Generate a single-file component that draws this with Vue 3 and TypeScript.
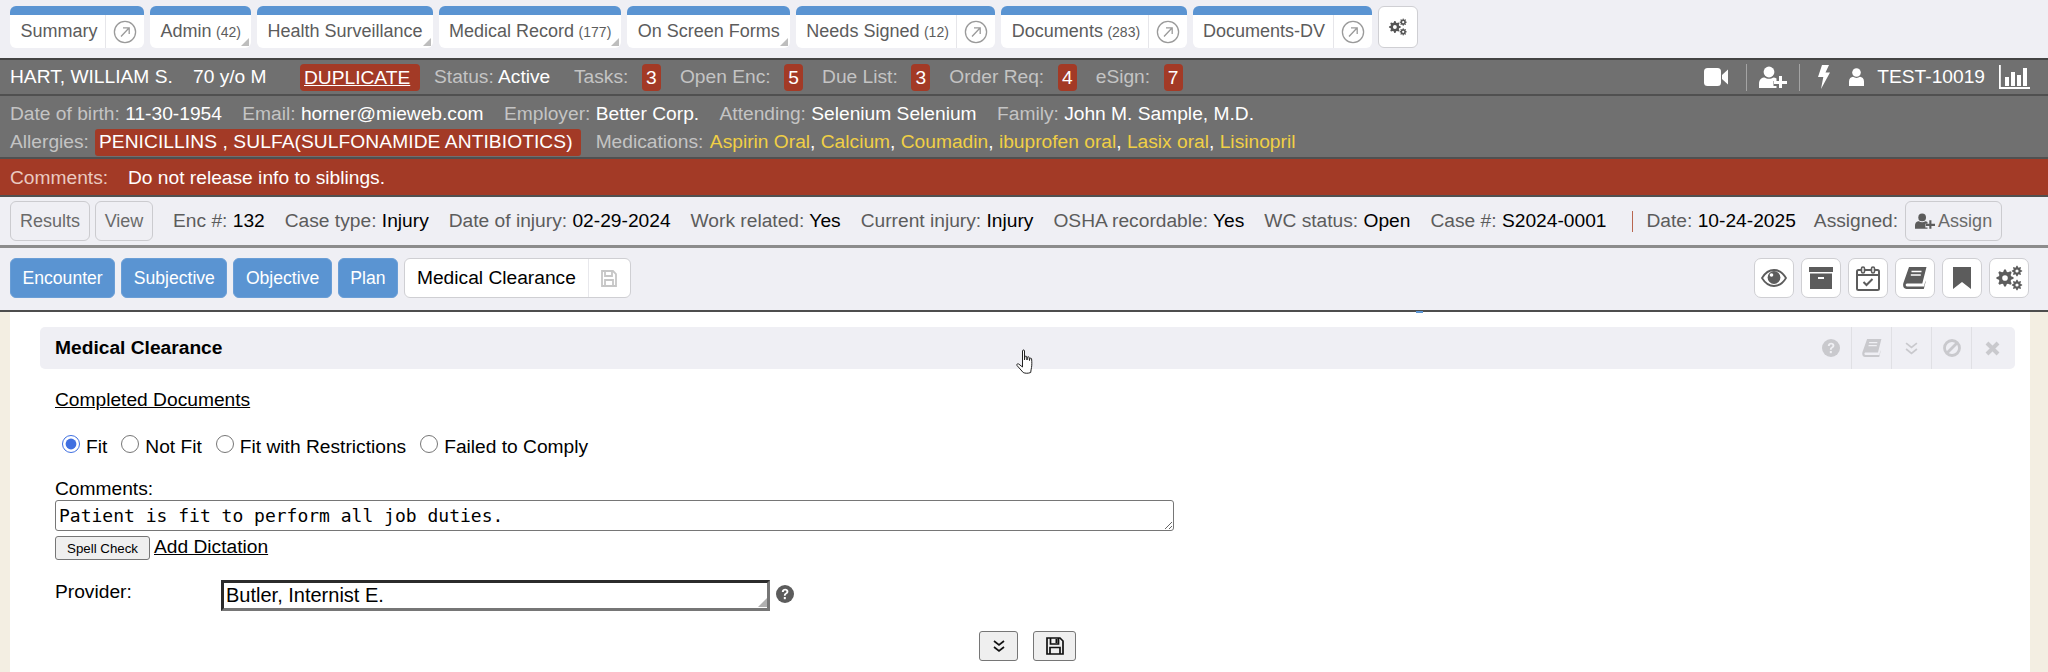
<script setup lang="ts">
interface Tab { name: string; count?: string; ext?: boolean }
const tabs: Tab[] = [
  { name: 'Summary', ext: true },
  { name: 'Admin', count: '(42)' },
  { name: 'Health Surveillance' },
  { name: 'Medical Record', count: '(177)' },
  { name: 'On Screen Forms' },
  { name: 'Needs Signed', count: '(12)', ext: true },
  { name: 'Documents', count: '(283)', ext: true },
  { name: 'Documents-DV', ext: true }
]
const counts = [
  { label: 'Tasks:', n: 3 },
  { label: 'Open Enc:', n: 5 },
  { label: 'Due List:', n: 3 },
  { label: 'Order Req:', n: 4 },
  { label: 'eSign:', n: 7 }
]
const demo = [
  ['Date of birth:', '11-30-1954'],
  ['Email:', 'horner@mieweb.com'],
  ['Employer:', 'Better Corp.'],
  ['Attending:', 'Selenium Selenium'],
  ['Family:', 'John M. Sample, M.D.']
]
const meds = ['Aspirin Oral', 'Calcium', 'Coumadin', 'ibuprofen oral', 'Lasix oral', 'Lisinopril']
const enc = [
  ['Enc #:', '132'],
  ['Case type:', 'Injury'],
  ['Date of injury:', '02-29-2024'],
  ['Work related:', 'Yes'],
  ['Current injury:', 'Injury'],
  ['OSHA recordable:', 'Yes'],
  ['WC status:', 'Open'],
  ['Case #:', 'S2024-0001']
]
const steps = ['Encounter', 'Subjective', 'Objective', 'Plan']
const radios = [
  { label: 'Fit', checked: true },
  { label: 'Not Fit', checked: false },
  { label: 'Fit with Restrictions', checked: false },
  { label: 'Failed to Comply', checked: false }
]

function gear(cx: number, cy: number, r: number, rIn: number, hole: number, teeth: number): string {
  let d = ''
  const n = teeth * 4
  for (let i = 0; i < n; i++) {
    const a = ((i - 0.5) / n) * Math.PI * 2
    const rad = i % 4 < 2 ? r : rIn
    d += (i ? 'L' : 'M') + (cx + rad * Math.cos(a)).toFixed(2) + ' ' + (cy + rad * Math.sin(a)).toFixed(2)
  }
  d += 'Z'
  d += `M${cx - hole} ${cy}a${hole} ${hole} 0 1 0 ${hole * 2} 0a${hole} ${hole} 0 1 0 ${-hole * 2} 0Z`
  return d
}
const gearsPath = gear(9, 13, 8.6, 6.4, 2.8, 8) + gear(21, 6, 5.2, 3.8, 1.6, 8) + gear(21, 20, 5.2, 3.8, 1.6, 8)
</script>

<template>
  <div class="page">
    <nav class="tabs">
      <div v-for="t in tabs" :key="t.name" class="tab" :class="{ menu: !t.ext }">
        <span class="tab-label">{{ t.name }}<small v-if="t.count">{{ t.count }}</small></span>
        <span v-if="t.ext" class="tab-ext">
          <svg width="24" height="24" viewBox="0 0 24 24" fill="none" stroke="#9a9a9a" stroke-width="1.3">
            <circle cx="12" cy="12" r="10.6" />
            <path d="M8 16.5 16 8M10 7.8h6.2V14" />
          </svg>
        </span>
      </div>
      <button class="tab-gear" type="button" aria-label="Settings">
        <svg width="20" height="18" viewBox="0 0 27 26"><path :d="gearsPath" fill="#555" fill-rule="evenodd" /></svg>
      </button>
    </nav>

    <section class="bar bar-top">
      <span class="name">HART, WILLIAM S.</span>
      <span class="age">70 y/o M</span>
      <a class="dup">DUPLICATE</a>
      <span class="lab status">Status: <b>Active</b></span>
      <template v-for="c in counts" :key="c.label">
        <span class="lab count-lab">{{ c.label }}</span>
        <span class="badge">{{ c.n }}</span>
      </template>
      <div class="top-icons">
        <svg class="i-cam" width="24" height="18" viewBox="0 0 24 18" fill="#fff"><rect width="17" height="18" rx="3.5" /><path d="M18 7 24 1.5v15L18 11Z" /></svg>
        <i class="vr vr-a"></i>
        <svg class="i-up" width="28" height="22" viewBox="0 0 28 22" fill="#fff"><circle cx="10" cy="6" r="5.4" /><path d="M0 22v-4c0-5 3-6.500 5.500-6.500 2.500 1.800 6.500 1.800 9 0 1 0 2 .3 3 1V15h-3v5h3v2Z" /><path d="M20 10h3v5h5v3h-5v4h-3v-4h-5v-3h5Z" /></svg>
        <i class="vr vr-b"></i>
        <svg class="i-bolt" width="12" height="24" viewBox="0 0 12 24" fill="#fff"><path d="M4 0h7L7.500 7.500H12L3 24l2.300-12H0Z" /></svg>
        <svg class="i-user" width="15" height="18" viewBox="0 0 15 18" fill="#fff"><circle cx="7.500" cy="4.500" r="4.300" /><path d="M0 18v-4.500C0 10.500 2 9 4 8.800c2 1.500 5 1.500 7 0 2 .2 4 1.700 4 4.700V18Z" /></svg>
        <span class="uid">TEST-10019</span>
        <svg class="i-chart" width="31" height="24" viewBox="0 0 31 24" fill="#fff"><path d="M0 0h1.800v22H31v2H0Z" /><rect x="6" y="12" width="4" height="9" /><rect x="12" y="7" width="4" height="14" /><rect x="18" y="10" width="4" height="11" /><rect x="24" y="3" width="4" height="18" /></svg>
      </div>
    </section>

    <section class="bar-info">
      <div class="info-row">
        <span v-for="d in demo" :key="d[0]" class="lab">{{ d[0] }} <b>{{ d[1] }}</b></span>
      </div>
      <div class="info-row second">
        <span class="lab allergy-lab">Allergies:</span>
        <span class="allergy">PENICILLINS , SULFA(SULFONAMIDE ANTIBIOTICS)</span>
        <span class="lab med-lab">Medications:</span>
        <span class="meds">
          <template v-for="(m, i) in meds" :key="m"><em>{{ m }}</em><template v-if="i < meds.length - 1">, </template></template>
        </span>
      </div>
    </section>

    <section class="bar-comment">
      <span class="c-lab">Comments:</span>
      <span>Do not release info to siblings.</span>
    </section>

    <section class="enc-row">
      <button class="ghost results" type="button">Results</button>
      <button class="ghost view" type="button">View</button>
      <div class="enc-fields">
        <span v-for="e in enc" :key="e[0]" class="f">{{ e[0] }} <b>{{ e[1] }}</b></span>
      </div>
      <i class="enc-div"></i>
      <span class="f date">Date: <b>10-24-2025</b></span>
      <span class="f assigned">Assigned:</span>
      <button class="ghost assign" type="button">
        <svg width="20" height="16" viewBox="0 0 28 22" fill="#5c5c5c"><circle cx="10" cy="6" r="5.400" /><path d="M0 22v-4c0-5 3-6.500 5.500-6.500 2.500 1.800 6.500 1.800 9 0 1 0 2 .3 3 1V15h-3v5h3v2Z" /><path d="M20 10h3v5h5v3h-5v4h-3v-4h-5v-3h5Z" /></svg>
        Assign
      </button>
    </section>

    <section class="toolbar">
      <button v-for="s in steps" :key="s" class="step" type="button">{{ s }}</button>
      <div class="current">
        <span class="cur-name">Medical Clearance</span>
        <span class="cur-save">
          <svg width="16" height="17" viewBox="0 0 16 17" fill="none" stroke="#c6c6c6" stroke-width="1.800"><path d="M1 1h11l3 3v12H1Z" /><path d="M4 1v5h7V1M4 16v-6h8v6" /></svg>
        </span>
      </div>
      <div class="tools">
        <button class="tool" type="button" aria-label="View">
          <svg width="26" height="18" viewBox="0 0 26 18"><path d="M1 9c3-5 7.500-8 12-8s9 3 12 8c-3 5-7.500 8-12 8S4 14 1 9Z" fill="none" stroke="#5c5c5c" stroke-width="1.800" /><circle cx="13" cy="8.500" r="6.400" fill="#5c5c5c" /><circle cx="10.500" cy="6" r="1.800" fill="#fff" /></svg>
        </button>
        <button class="tool" type="button" aria-label="Archive">
          <svg width="24" height="22" viewBox="0 0 24 22" fill="#5c5c5c"><rect width="24" height="5" /><path d="M1 6.500h22V22H1ZM9 10v2h6v-2Z" fill-rule="evenodd" /></svg>
        </button>
        <button class="tool" type="button" aria-label="Calendar">
          <svg width="24" height="25" viewBox="0 0 24 25" fill="none" stroke="#5c5c5c" stroke-width="2"><rect x="1" y="4" width="22" height="20" rx="1.500" /><path d="M1 9h22" /><rect x="5.500" y="1" width="3" height="6" rx="1.500" fill="#fff" stroke-width="1.600" /><rect x="15.500" y="1" width="3" height="6" rx="1.500" fill="#fff" stroke-width="1.600" /><path d="m7.500 16 3 3 6-6" /></svg>
        </button>
        <button class="tool" type="button" aria-label="Book">
          <svg width="24" height="22" viewBox="0 0 24 22"><path d="M6 0h17.500l-4.200 16.500H4c-1.700 0-1.700 3 0 3h17l1.500-6v1.800L20.800 22H3.500C.5 22-.5 19 .4 16Z" fill="#5c5c5c" /><path d="M8.500 4.500h10M7.800 8h10" stroke="#fff" stroke-width="1.600" /></svg>
        </button>
        <button class="tool" type="button" aria-label="Bookmark">
          <svg width="18" height="22" viewBox="0 0 18 22" fill="#5c5c5c"><path d="M0 0h18v22l-9-7-9 7Z" /></svg>
        </button>
        <button class="tool" type="button" aria-label="Settings">
          <svg width="27" height="26" viewBox="0 0 27 26"><path :d="gearsPath" fill="#5c5c5c" fill-rule="evenodd" /></svg>
        </button>
      </div>
    </section>

    <main class="content">
      <i class="blip"></i>
      <div class="panel-head">
        <span class="panel-title">Medical Clearance</span>
        <div class="panel-icons">
          <span class="pi pi-q">
            <svg width="18" height="18" viewBox="0 0 18 18"><circle cx="9" cy="9" r="9" fill="#c9c9cd" /><path d="M5.800 7c0-4.300 6.600-4.300 6.600-.4 0 2.500-2.700 2.300-2.700 4.200H7.900c0-3 2.500-2.800 2.500-4.100 0-1.500-2.600-1.500-2.600.3Z" fill="#f0f0f4" /><rect x="7.800" y="12" width="2" height="2.200" fill="#f0f0f4" /></svg>
          </span>
          <span class="pi">
            <svg width="20" height="18" viewBox="0 0 24 22"><path d="M6 0h17.500l-4.200 16.500H4c-1.700 0-1.700 3 0 3h17l1.500-6v1.800L20.800 22H3.500C.5 22-.5 19 .4 16Z" fill="#c9c9cd" /><path d="M8.500 4.500h10M7.800 8h10" stroke="#f0f0f4" stroke-width="1.600" /></svg>
          </span>
          <span class="pi">
            <svg width="13" height="13" viewBox="0 0 12 12" fill="none" stroke="#c9c9cd" stroke-width="1.600"><path d="m1 1 5 4 5-4M1 6.500l5 4 5-4" /></svg>
          </span>
          <span class="pi">
            <svg width="18" height="18" viewBox="0 0 18 18" fill="none" stroke="#c9c9cd" stroke-width="2.800"><circle cx="9" cy="9" r="7.500" /><path d="M4 14 14 4" /></svg>
          </span>
          <span class="pi">
            <svg width="15" height="15" viewBox="0 0 15 15" fill="none" stroke="#c9c9cd" stroke-width="4"><path d="m2 2 11 11M13 2 2 13" /></svg>
          </span>
        </div>
      </div>

      <form class="form" @submit.prevent>
        <a class="doc-link">Completed Documents</a>
        <div class="radios">
          <label v-for="r in radios" :key="r.label" class="radio">
            <input type="radio" name="fit" :checked="r.checked" />{{ r.label }}
          </label>
        </div>
        <div class="comment-lab">Comments:</div>
        <textarea class="ta" readonly>Patient is fit to perform all job duties.</textarea>
        <div class="spell-row">
          <button class="spell" type="button">Spell Check</button>
          <a class="dict">Add Dictation</a>
        </div>
        <div class="prov-row">
          <span class="prov-lab">Provider:</span>
          <div class="prov-box">
            <input class="prov" type="text" value="Butler, Internist E." readonly />
          </div>
          <svg class="prov-q" width="18" height="18" viewBox="0 0 18 18"><circle cx="9" cy="9" r="9" fill="#5c5c5c" /><path d="M5.800 7c0-4.300 6.600-4.300 6.600-.4 0 2.500-2.700 2.300-2.700 4.200H7.900c0-3 2.500-2.800 2.500-4.100 0-1.500-2.600-1.500-2.600.3Z" fill="#fff" /><rect x="7.800" y="12" width="2" height="2.200" fill="#fff" /></svg>
        </div>
        <div class="actions">
          <button class="act act-a" type="button" aria-label="Expand">
            <svg width="12" height="13" viewBox="0 0 12 13" fill="none" stroke="#111" stroke-width="1.700"><path d="m1 1 5 4 5-4M1 7l5 4 5-4" /></svg>
          </button>
          <button class="act act-b" type="button" aria-label="Save">
            <svg width="18" height="18" viewBox="0 0 18 18" fill="none" stroke="#111" stroke-width="1.700"><path d="M1 1h13l3 3v13H1Z" /><path d="M4.500 1v6h8V1M4 17v-6.500h10V17" /><rect x="9.500" y="2" width="2" height="4" fill="#111" stroke="none" /></svg>
          </button>
        </div>
      </form>

      <svg class="hand" width="20" height="26" viewBox="0 0 20 26" fill="#fff" stroke="#222" stroke-width="1" stroke-linejoin="round"><path d="M6.500 2c0-1.400 2-1.400 2 0v9l.3-3c.2-1.200 1.900-1.100 2 0l.2 3 .3-2.500c.2-1.100 1.800-1 1.900.1l.3 2.900.3-1.700c.2-1 1.700-.9 1.800.2.300 3 .3 6.500-.1 8.500-.3 1.700-.6 3-.8 5-2.500 1-5.500 1-7.500 0L1 16.500c-.7-1 .6-2.300 1.700-1.500l3.800 3Z" /></svg>
    </main>
  </div>
</template>

<style>
html, body { margin: 0; background: #fff; }
</style>

<style scoped>
.page {
  width: 2048px;
  height: 672px;
  overflow: hidden;
  display: flex;
  flex-direction: column;
  font-family: "Liberation Sans", Arial, sans-serif;
  font-size: 19.2px;
  color: #000;
  background: #fff;
}
b { font-weight: 400; }
button { font-family: inherit; }

/* tabs */
.tabs {
  height: 58px;
  box-sizing: border-box;
  padding: 6px 0 0 10px;
  background: #efeff4;
  display: flex;
  gap: 6px;
  flex: none;
}
.tab {
  position: relative;
  height: 42px;
  box-sizing: border-box;
  display: flex;
  background: #fff;
  border-top: 9px solid #5a94d2;
  border-radius: 6px;
  color: #5c5c5c;
  font-size: 18px;
}
.tab-label {
  padding: 0 7.5px 0 10.5px;
  line-height: 33px;
  white-space: nowrap;
}
.tab.menu .tab-label { padding-right: 10px; }
.tab small { font-size: 14px; margin-left: 4.5px; }
.tab-ext {
  width: 38px;
  border-left: 1px solid #e6e6ea;
  display: flex;
  align-items: center;
  justify-content: center;
}
.tab.menu::after {
  content: "";
  position: absolute;
  right: 2px;
  bottom: 2px;
  border-left: 8px solid transparent;
  border-bottom: 8px solid #bdbdbd;
}
.tab-gear {
  width: 40px;
  height: 42px;
  padding: 0;
  background: #fff;
  border: 1px solid #cfcfd3;
  border-radius: 6px;
  display: flex;
  align-items: center;
  justify-content: center;
}

/* patient bars */
.bar-top {
  height: 38px;
  box-sizing: border-box;
  border-top: 2px solid #444;
  border-bottom: 2px solid #505050;
  background: #707070;
  display: flex;
  align-items: center;
  padding-left: 10px;
  color: #fff;
  flex: none;
}
.lab { color: #c4c4c4; white-space: nowrap; }
.lab b { color: #fff; }
.name { width: 183px; white-space: nowrap; }
.age { width: 107px; white-space: nowrap; }
.dup {
  width: 120px;
  height: 27px;
  box-sizing: border-box;
  padding-left: 4px;
  line-height: 27px;
  background: #a33a26;
  border-radius: 4px;
  text-decoration: underline;
}
.status { margin-left: 14px; width: 140px; }
.count-lab { margin-right: 13.5px; }
.badge {
  width: 19px;
  height: 27px;
  line-height: 27px;
  text-align: center;
  background: #a33a26;
  border-radius: 4px;
  margin-right: 19px;
}
.top-icons {
  margin-left: auto;
  display: flex;
  align-items: center;
  padding-right: 18px;
}
.vr { width: 1px; height: 27px; background: #a4a4a4; }
.vr-a { margin: 0 12px 0 18px; }
.vr-b { margin: 0 18px 0 12px; }
.i-user { margin-left: 19px; }
.uid { margin-left: 13px; }
.i-chart { margin-left: 14px; }

.bar-info {
  height: 63px;
  box-sizing: border-box;
  background: #707070;
  border-bottom: 2px solid #505050;
  padding: 5px 0 0 10px;
  flex: none;
}
.info-row {
  display: flex;
  gap: 20.4px;
  height: 26px;
  line-height: 26px;
  color: #fff;
}
.info-row.second { gap: 0; height: 27px; line-height: 26px; margin-top: 2px; }
.allergy {
  margin-left: 6px;
  padding: 0 8px 0 4px;
  background: #a33a26;
  border-radius: 3px;
  white-space: nowrap;
  letter-spacing: .08px;
}
.med-lab { margin-left: 15px; margin-right: 6.5px; }
.meds { color: #fff; white-space: nowrap; }
.meds em { font-style: normal; color: #f0cf45; }

.bar-comment {
  height: 38px;
  box-sizing: border-box;
  padding: 1px 0 0 10px;
  background: #a33a26;
  border-bottom: 2px solid #505050;
  color: #fff;
  display: flex;
  align-items: center;
  flex: none;
}
.c-lab { color: #eac9c0; width: 118px; }

/* encounter row */
.enc-row {
  height: 51px;
  box-sizing: border-box;
  background: #efeff4;
  border-bottom: 3px solid #8c8c8c;
  display: flex;
  align-items: center;
  padding-left: 10px;
  flex: none;
}
.ghost {
  height: 40px;
  padding: 0;
  background: #efeff4;
  border: 1px solid #cbcbcf;
  border-radius: 6px;
  color: #6a6a6a;
  font-size: 18px;
}
.results { width: 80px; }
.view { width: 58px; margin-left: 5px; }
.enc-fields { display: flex; gap: 20px; margin-left: 20px; }
.f { color: #5c5c5c; white-space: nowrap; }
.f b { color: #000; }
.enc-div { width: 1px; height: 21px; background: #b9664f; margin-left: 25px; }
.date { margin-left: 14px; }
.assigned { margin-left: 18px; }
.assign {
  margin-left: 7px;
  width: 97px;
  display: flex;
  align-items: center;
  justify-content: center;
  gap: 3px;
  flex: none;
}

/* toolbar */
.toolbar {
  height: 64px;
  box-sizing: border-box;
  background: #efeff4;
  border-bottom: 2px solid #4d4d4d;
  display: flex;
  align-items: flex-start;
  padding: 10px 19px 0 10px;
  gap: 6px;
  flex: none;
}
.step {
  height: 40px;
  padding: 0 11.5px;
  background: #5a94d2;
  border: 1px solid #6a9ed6;
  border-radius: 6px;
  color: #fff;
  font-size: 17.6px;
}
.current {
  height: 40px;
  box-sizing: border-box;
  display: flex;
  background: #fff;
  border: 1px solid #cfcfd3;
  border-radius: 6px;
}
.cur-name { line-height: 38px; padding: 0 12px; white-space: nowrap; }
.cur-save {
  width: 41px;
  border-left: 1px solid #e8e8ec;
  display: flex;
  align-items: center;
  justify-content: center;
}
.tools { margin-left: auto; display: flex; gap: 7px; }
.tool {
  width: 40px;
  height: 40px;
  padding: 0;
  background: #fff;
  border: 1px solid #cfcfd3;
  border-radius: 7px;
  display: flex;
  align-items: center;
  justify-content: center;
}

/* content */
.content {
  position: relative;
  flex: 1;
  margin: 0 18px 0 10px;
  padding: 15px 15px 0 30px;
  background: #fff;
  box-shadow: -10px 0 0 #f3eee2, 18px 0 0 #f3eee2;
}
.blip {
  position: absolute;
  left: 1406px;
  top: -1px;
  width: 7px;
  height: 2px;
  background: #5a94d2;
}
.panel-head {
  height: 42px;
  box-sizing: border-box;
  background: #efeff4;
  border-radius: 5px;
  display: flex;
  align-items: center;
  justify-content: space-between;
  padding-left: 15px;
}
.panel-title { font-weight: 700; }
.panel-icons { display: flex; height: 100%; }
.pi {
  width: 40px;
  height: 100%;
  border-left: 1px solid #e0e0e4;
  box-sizing: border-box;
  display: flex;
  align-items: center;
  justify-content: center;
}
.pi-q { border-left: 0; }
.pi:last-child { width: 44px; padding-right: 3px; }

.form { padding-left: 15px; }
.doc-link { display: block; margin-top: 20px; line-height: 21px; text-decoration: underline; }
.radios { display: flex; margin-top: 22px; height: 24px; align-items: center; }
.radio { display: flex; align-items: center; margin-right: 11px; line-height: 24px; padding-top: 6px; white-space: nowrap; }
.radio input { margin: -7px 6px 0 7px; width: 18px; height: 18px; accent-color: #3f6fe0; }
.radio:not(:first-child) input { margin-left: 3px; }
.comment-lab { margin-top: 22px; line-height: 21px; }
.ta {
  display: block;
  box-sizing: border-box;
  width: 1119px;
  height: 31px;
  margin-top: 1px;
  padding: 4px 3px 0;
  font-family: "DejaVu Sans Mono", monospace;
  font-size: 18px;
  line-height: 21px;
  border: 1px solid #767676;
  border-radius: 3px;
  outline: none;
  resize: vertical;
}
.spell-row { display: flex; align-items: flex-start; margin-top: 5px; height: 24px; }
.spell {
  width: 95px;
  height: 24px;
  padding: 0;
  font-size: 13.3px;
  background: #efefef;
  border: 1px solid #767676;
  border-radius: 3px;
  color: #000;
}
.dict { margin-left: 4px; text-decoration: underline; line-height: 21px; }
.prov-row { position: relative; display: flex; margin-top: 20px; height: 30px; }
.prov-lab { width: 166px; padding-top: 1px; line-height: 21px; }
.prov-box { position: relative; }
.prov-box::after {
  content: "";
  position: absolute;
  right: 3px;
  bottom: 3px;
  border-left: 9px solid transparent;
  border-bottom: 9px solid #b0b0b0;
}
.prov {
  display: block;
  box-sizing: border-box;
  width: 549px;
  height: 31px;
  padding: 0 2px;
  border: 3px solid;
  border-color: #2b2b2b #767676 #767676 #2b2b2b;
  font-family: inherit;
  font-size: 20px;
  outline: none;
}
.prov-q { margin: 5px 0 0 6px; }
.actions { display: flex; margin: 21px 0 0 924px; gap: 15px; }
.act {
  height: 30px;
  padding: 0;
  background: #efefef;
  border: 1px solid #767676;
  border-radius: 3px;
  display: flex;
  align-items: center;
  justify-content: center;
}
.act-a { width: 39px; }
.act-b { width: 43px; }
.hand { position: absolute; left: 1006px; top: 37px; }
</style>
